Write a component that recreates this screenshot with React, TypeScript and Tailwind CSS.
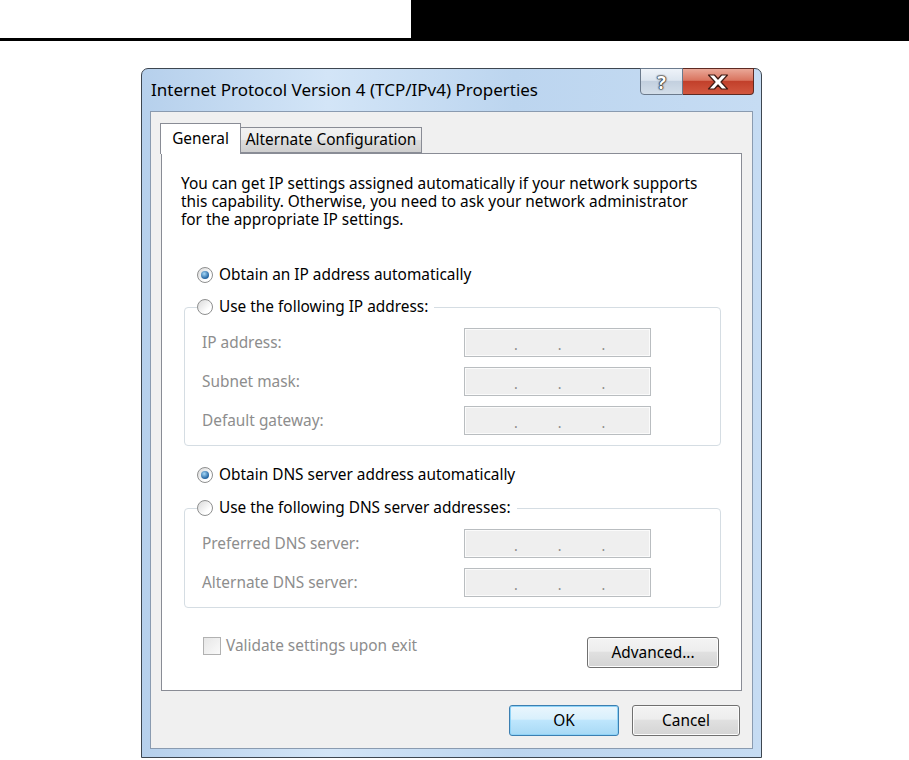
import React from 'react';

const font = { fontFamily: '"Noto Sans", "Open Sans", sans-serif' };

function Radio({ checked }: { checked?: boolean }) {
  return (
    <span className="w-[16px] h-[16px] rounded-full border border-[#8e8f8f] bg-[linear-gradient(135deg,#d9d9d9,#ffffff_70%)] flex items-center justify-center shrink-0">
      {checked && (
        <span className="w-[8px] h-[8px] rounded-full bg-[radial-gradient(circle_at_40%_35%,#a6d8f7,#2a6aa6_65%,#174a7c)]" />
      )}
    </span>
  );
}

function IpField() {
  return (
    <div className="w-[187px] h-[29px] border border-[#b9bdc0] bg-[#efefef] shadow-[inset_0_0_0_1px_#fbfbfb] flex items-end pb-[4px] pl-[49px] gap-[40px] text-[#8a8a8a] text-[14px] leading-[14px]">
      <span>.</span>
      <span>.</span>
      <span>.</span>
    </div>
  );
}

function FieldRow({ label }: { label: string }) {
  return (
    <div className="flex items-center h-[29px]">
      <span className="w-[262px] text-[#8d8d8d]">{label}</span>
      <IpField />
    </div>
  );
}

function Group({ legend, rows }: { legend: string; rows: string[] }) {
  return (
    <fieldset className="ml-[22px] mr-[20px] border border-[#d5dde3] rounded-[4px]">
      <legend className="ml-[12px] pr-[6px] h-[20px] flex items-center gap-[6px] text-black">
        <Radio />
        <span>{legend}</span>
      </legend>
      <div className="pl-[17px] pt-[11px] pb-[10px] flex flex-col gap-[10px]">
        {rows.map((r) => (
          <FieldRow key={r} label={r} />
        ))}
      </div>
    </fieldset>
  );
}

function Button({ label, primary, w }: { label: string; primary?: boolean; w: string }) {
  return (
    <button
      className={`${w} h-[31px] rounded-[3px] border text-[15.4px] text-black flex items-center justify-center ${
        primary
          ? 'border-[#3c7fb1] bg-[linear-gradient(#eaf6fd,#d9f0fc_45%,#bee6fd_50%,#a7d9f5)] shadow-[inset_0_0_0_1px_#8fd3f7]'
          : 'border-[#707070] bg-[linear-gradient(#f4f4f4,#ededed_45%,#e0e0e0_50%,#d4d4d4)] shadow-[inset_0_0_0_1px_#fcfcfc]'
      }`}
    >
      {label}
    </button>
  );
}

export default function App() {
  return (
    <div className="w-[909px] h-[760px] bg-white overflow-hidden text-[15.4px]" style={font}>
      {/* page header */}
      <div className="flex h-[41px]">
        <div className="w-[411px] border-b-[3px] border-black" />
        <div className="flex-1 bg-black" />
      </div>

      {/* dialog window */}
      <div className="ml-[141px] mt-[27px] w-[621px] h-[690px] rounded-t-[7px] border border-[#3d4650] bg-[linear-gradient(90deg,#b6d0ec,#d3e5f7_30%,#bcd5ef_60%,#c6dcf3)] px-[8px] pb-[8px] flex flex-col">
        {/* title bar */}
        <div className="h-[42px] flex justify-between">
          <div className="self-center pl-[1px] text-[17px] text-black">
            Internet Protocol Version 4 (TCP/IPv4) Properties
          </div>
          <div className="flex self-start -mt-[1px] -mr-[1px]">
            <div className="w-[43px] h-[27px] rounded-bl-[4px] border border-[#6b7a8c] bg-[linear-gradient(#eef3f9,#dce5ef_45%,#c3d0df_50%,#d3dee9)] flex items-center justify-center">
              <span className="text-[18px] font-bold text-white leading-none [text-shadow:0_0_1px_#222,0_0_1px_#222,0_0_2px_#222,0_0_2px_#222]">?</span>
            </div>
            <div className="w-[71px] h-[27px] rounded-br-[4px] border border-l-0 border-[#5d2a22] bg-[linear-gradient(#eaa898,#d9745f_45%,#c2402b_50%,#d2573f)] flex items-center justify-center">
              <svg width="22" height="16" viewBox="0 0 22 16">
                <path
                  d="M1.5 1h6l3.5 4 3.5-4h6l-6.5 7 6.5 7h-6L11 11l-3.5 4h-6L8 8z"
                  fill="#ffffff"
                  stroke="#3f1a13"
                  strokeWidth="1.2"
                  strokeLinejoin="round"
                />
              </svg>
            </div>
          </div>
        </div>

        {/* client area */}
        <div className="h-[638px] border border-[#8a9bb0] bg-[#f0f0f0] px-[10px] pt-[11px] flex flex-col">
          {/* tabs */}
          <div className="flex items-end h-[30px]">
            <div className="relative z-10 -ml-[1px] -mb-[1px] w-[81px] h-[31px] border border-b-0 border-[#898c95] bg-white flex items-start justify-center pt-[3px] text-black">
              General
            </div>
            <div className="w-[181px] h-[26px] border border-l-0 border-[#898c95] bg-[linear-gradient(#f2f2f2,#ebebeb_50%,#dcdcdc_50%,#cfcfcf)] flex items-center justify-center text-black">
              Alternate Configuration
            </div>
          </div>

          {/* tab panel */}
          <div className="h-[538px] border border-[#898c95] bg-white flex flex-col">
            <p className="mt-[21px] ml-[19px] leading-[18px] text-black whitespace-nowrap">
              You can get IP settings assigned automatically if your network supports
              <br />
              this capability. Otherwise, you need to ask your network administrator
              <br />
              for the appropriate IP settings.
            </p>

            <div className="mt-[36px] ml-[35px] h-[20px] flex items-center gap-[6px] text-black">
              <Radio checked />
              <span>Obtain an IP address automatically</span>
            </div>

            <div className="mt-[12px]">
              <Group legend="Use the following IP address:" rows={['IP address:', 'Subnet mask:', 'Default gateway:']} />
            </div>

            <div className="mt-[19px] ml-[35px] h-[20px] flex items-center gap-[6px] text-black">
              <Radio checked />
              <span>Obtain DNS server address automatically</span>
            </div>

            <div className="mt-[13px]">
              <Group legend="Use the following DNS server addresses:" rows={['Preferred DNS server:', 'Alternate DNS server:']} />
            </div>

            <div className="mt-[28px] ml-[41px] mr-[21px] flex items-start justify-between">
              <div className="flex items-center gap-[5px] h-[19px] text-[#8d8d8d]">
                <span className="w-[18px] h-[18px] border border-[#b1b1b1] bg-[linear-gradient(135deg,#e6e6e6,#fafafa)]" />
                <span>Validate settings upon exit</span>
              </div>
              <div className="mt-[1px] mr-[1px]">
                <Button label="Advanced..." w="w-[132px]" />
              </div>
            </div>
          </div>

          {/* dialog buttons */}
          <div className="mt-[14px] pr-[2px] flex justify-end gap-[13px]">
            <Button label="OK" primary w="w-[110px]" />
            <Button label="Cancel" w="w-[108px]" />
          </div>
        </div>
      </div>
    </div>
  );
}
